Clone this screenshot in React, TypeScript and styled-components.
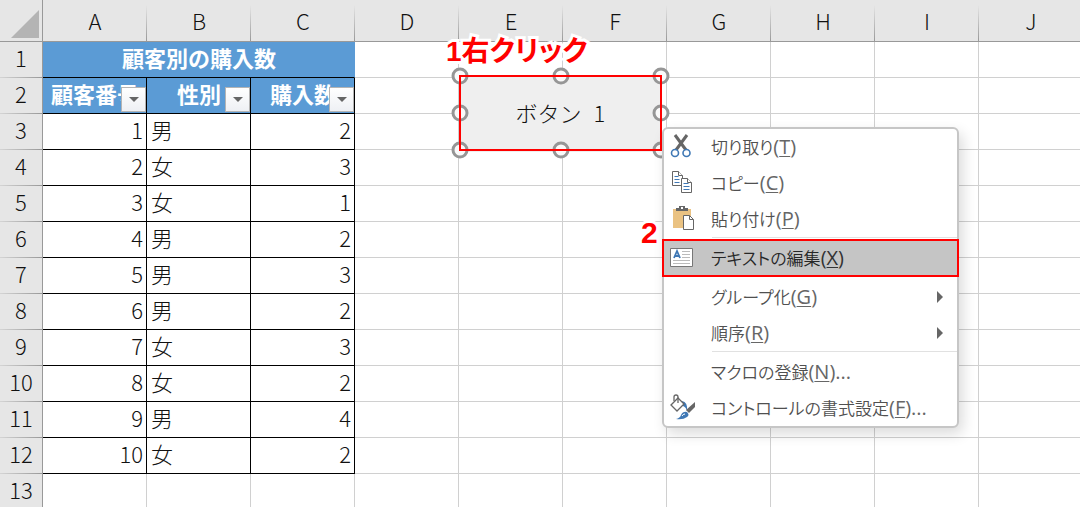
import React from "react";
import styled, { createGlobalStyle, css } from "styled-components";

const GlobalStyle = createGlobalStyle`
  * { box-sizing: border-box; }
  html, body { margin: 0; background: #fff; }
  body { font-family: "Noto Sans CJK JP", sans-serif; }
`;

const Workbook = styled.main`
  position: relative;
  width: 100%;
  height: 100vh;
  overflow: hidden;
  color: #111;
  font-size: 22px;
  font-weight: 300;
`;

const Sheet = styled.table`
  table-layout: fixed;
  width: 1083px;
  border-collapse: separate;
  border-spacing: 0;
`;

const RowHeaderCol = styled.col`
  width: 43px;
`;

const Corner = styled.td`
  height: 42px;
  padding: 0 3px 3px 0;
  background: #e6e6e6;
  border-right: 1px solid #999;
  border-bottom: 1px solid #999;
  vertical-align: bottom;
  text-align: right;
  svg { display: block; margin-left: auto; }
`;

const ColumnHeader = styled.th`
  height: 42px;
  padding: 0 0 1px;
  background: linear-gradient(#e6e6e6, #999) right bottom / 1px 36px no-repeat #e6e6e6;
  border-bottom: 1px solid #999;
  font-weight: 300;
  line-height: 36px;
`;

const RowHeader = styled.th`
  height: 36px;
  padding: 0 0 6px;
  background: linear-gradient(90deg, #d4d4d4, #999) left bottom / 100% 1px no-repeat #e6e6e6;
  border-right: 1px solid #999;
  font-weight: 300;
  line-height: 30px;
`;

type CellKind = "data" | "title" | "heading";

const Cell = styled.td<{ $kind?: CellKind; $align?: "left" | "right" | "center" }>`
  position: relative;
  height: 36px;
  padding: 0 3px 5px 4px;
  border-right: 1px solid #d0d0d0;
  border-bottom: 1px solid #d0d0d0;
  line-height: 30px;
  text-align: ${(p) => p.$align ?? "left"};
  white-space: nowrap;
  ${(p) => p.$kind && css`border-color: #000;`}
  ${(p) => (p.$kind === "title" || p.$kind === "heading") && css`
    background: #5b9bd5;
    color: #fff;
    font-weight: 700;
  `}
  ${(p) => p.$kind === "title" && css`border-right-color: #5b9bd5;`}
`;

const FilterButton = styled.button`
  position: absolute;
  right: 0;
  bottom: 1px;
  display: flex;
  align-items: center;
  justify-content: center;
  width: 25px;
  height: 25px;
  padding: 0;
  border: 1px solid #b4b4b4;
  background: linear-gradient(#fff, #eef0f4);
`;

const FormButton = styled.button`
  position: absolute;
  left: 459px;
  top: 75px;
  display: flex;
  align-items: center;
  justify-content: center;
  gap: 12px;
  width: 203px;
  height: 77px;
  padding: 0 0 4px;
  border: 0;
  background: #efefef;
  color: #111;
  font: inherit;
  svg { position: absolute; left: -10px; top: -10px; }
`;

const Callout = styled.strong<{ $x: number; $y: number; $size: number }>`
  position: absolute;
  left: ${(p) => p.$x}px;
  top: ${(p) => p.$y}px;
  color: #f00;
  font-family: "Liberation Sans", "Noto Sans CJK JP", sans-serif;
  font-size: ${(p) => p.$size}px;
  font-weight: 700;
  line-height: 36px;
  white-space: nowrap;
  font-feature-settings: "palt";
  -webkit-text-stroke: 6px #fff;
  paint-order: stroke fill;
`;

const Menu = styled.div`
  position: absolute;
  left: 662px;
  top: 127px;
  width: 297px;
  border: 2px solid #c6c6c6;
  border-radius: 6px;
  background: #fff;
  box-shadow: 4px 6px 14px rgba(0, 0, 0, 0.14);
`;

const MenuItem = styled.button<{ $active?: boolean }>`
  position: relative;
  display: grid;
  grid-template-columns: 47px 1fr 20px;
  align-items: center;
  width: 100%;
  height: 36px;
  padding: 0;
  border: 0;
  background: none;
  color: #505050;
  font-family: "Noto Sans CJK JP", sans-serif;
  font-size: 17px;
  font-weight: 350;
  font-feature-settings: "palt";
  line-height: 34px;
  text-align: left;
  white-space: nowrap;
  ${(p) => p.$active && css`
    width: calc(100% + 2px);
    margin: 0 -1px;
    padding: 0 1px;
    background: #c5c5c5;
    color: #262626;
    outline: 2px solid #f00;
    outline-offset: -1px;
  `}
`;

const IconSlot = styled.span`
  display: flex;
  padding: 0 0 2px 6px;
`;

const Mnemonic = styled.span<{ $active?: boolean }>`
  color: ${(p) => (p.$active ? "#333" : "#666")};
  font-family: "Open Sans", sans-serif;
  font-size: 20px;
  font-weight: 400;
  u { text-decoration-thickness: 1px; text-underline-offset: 2px; }
`;

const Divider = styled.hr`
  height: 1px;
  margin: 0 0 2px 48px;
  border: 0;
  background: #e1e1e1;
`;

const CutIcon = () => (
  <svg width="26" height="26" viewBox="0 0 26 26" fill="none">
    <path d="M5 2 16 17M17 2 6 17" stroke="#666" strokeWidth="3" />
    <circle cx="5" cy="20" r="3.500" fill="#fff" stroke="#3f78b5" strokeWidth="1.600" />
    <circle cx="16.500" cy="20" r="3.500" fill="#fff" stroke="#3f78b5" strokeWidth="1.600" />
  </svg>
);

const CopyIcon = () => (
  <svg width="26" height="26" viewBox="0 0 26 26" fill="#fff" stroke="#666">
    <path d="M2.500 2.500h6l4 4v10h-10z" />
    <path d="M8.500 2.500v4h4" />
    <path d="M4.500 7.500h4M4.500 10.500h5M4.500 13.500h5" stroke="#3f78b5" />
    <path d="M11.500 9.500h6l4 4v10h-10z" />
    <path d="M17.500 9.500v4h4" />
    <path d="M13.500 14.500h5M13.500 17.500h6M13.500 20.500h6" stroke="#3f78b5" />
  </svg>
);

const PasteIcon = () => (
  <svg width="26" height="26" viewBox="0 0 26 26" fill="none">
    <path d="M3 4h18v19H3z" fill="#eac282" />
    <path d="M6 6V3h3V1h6v2h3v3z" fill="#666" />
    <path d="M11 2h2v2h-2z" fill="#fff" />
    <path d="M13.500 10.500h6l4 4v10h-10z" fill="#fff" stroke="#666" />
    <path d="M19.500 10.500v4h4" stroke="#666" />
  </svg>
);

const TextIcon = () => (
  <svg width="26" height="26" viewBox="0 0 26 26" fill="none">
    <path d="M.5 4.500h22v18H.5z" fill="#fff" stroke="#777" />
    <path d="m4 14 3-7 3 7M5 12h4" stroke="#3f78b5" strokeWidth="1.800" />
    <path d="M12 7.500h8M12 10.500h8M12 13.500h8M3 16.500h17M3 19.500h17" stroke="#bbb" />
  </svg>
);

const FormatIcon = () => (
  <svg width="26" height="28" viewBox="0 0 26 28" fill="none">
    <path d="M12 8q6 1 5 10-1-4-4-5z" fill="#3f78b5" />
    <path d="m1 12 7-7 6 6-7 7z" fill="#fff" stroke="#666" strokeWidth="1.300" />
    <path d="M4 8V4q0-2 2-2t2 2v6" stroke="#666" strokeWidth="1.300" />
    <path d="M25 9v5l-6 6-3-3z" fill="#666" />
    <path d="M6 26q4-1 5-4 2-4 6-3 3 3 0 5-4 3-11 2z" fill="#3f78b5" />
    <path d="M12 23q1-2 3-2" stroke="#fff" />
  </svg>
);

const Arrow = () => (
  <svg width="7" height="12" viewBox="0 0 7 12">
    <path d="M0 0l6 6-6 6z" fill="#666" />
  </svg>
);

const HANDLES = [
  [11, 11], [112, 11], [212, 11],
  [11, 48], [212, 48],
  [11, 85], [112, 85], [212, 85],
];

const SelectionFrame = () => (
  <svg width="224" height="98" viewBox="0 0 224 98" fill="none">
    {HANDLES.map(([x, y]) => (
      <circle key={`${x}-${y}`} cx={x} cy={y} r="7" fill="#fafafa" stroke="#969696" strokeWidth="3" />
    ))}
    <path d="M11 11h201v74H11z" stroke="#f00" strokeWidth="2" />
  </svg>
);

const COLUMNS = ["A", "B", "C", "D", "E", "F", "G", "H", "I", "J"];
const HEADINGS = ["顧客番号", "性別", "購入数"];
const RECORDS: [number, string, number][] = [
  [1, "男", 2], [2, "女", 3], [3, "女", 1], [4, "男", 2], [5, "男", 3],
  [6, "男", 2], [7, "女", 3], [8, "女", 2], [9, "男", 4], [10, "女", 2],
];

const EmptyCells = ({ count }: { count: number }) => (
  <>{Array.from({ length: count }, (_, i) => <Cell key={i} />)}</>
);

type Entry = { label: string; letter: string; more?: string; icon?: React.ReactNode; submenu?: boolean; active?: boolean };

const MENU: Entry[][] = [
  [
    { label: "切り取り", letter: "T", icon: <CutIcon /> },
    { label: "コピー", letter: "C", icon: <CopyIcon /> },
    { label: "貼り付け", letter: "P", icon: <PasteIcon /> },
  ],
  [{ label: "テキストの編集", letter: "X", icon: <TextIcon />, active: true }],
  [
    { label: "グループ化", letter: "G", submenu: true },
    { label: "順序", letter: "R", submenu: true },
  ],
  [
    { label: "マクロの登録", letter: "N", more: "..." },
    { label: "コントロールの書式設定", letter: "F", more: "...", icon: <FormatIcon /> },
  ],
];

export default function App() {
  return (
    <Workbook>
      <GlobalStyle />
      <Sheet>
        <colgroup>
          <RowHeaderCol />
          {COLUMNS.map((c) => <col key={c} />)}
        </colgroup>
        <thead>
          <tr>
            <Corner>
              <svg width="28" height="28" viewBox="0 0 28 28"><path d="M28 0v28H0z" fill="#b4b4b4" /></svg>
            </Corner>
            {COLUMNS.map((c) => <ColumnHeader key={c} scope="col">{c}</ColumnHeader>)}
          </tr>
        </thead>
        <tbody>
          <tr>
            <RowHeader scope="row">1</RowHeader>
            <Cell colSpan={3} $kind="title" $align="center">顧客別の購入数</Cell>
            <EmptyCells count={7} />
          </tr>
          <tr>
            <RowHeader scope="row">2</RowHeader>
            {HEADINGS.map((h) => (
              <Cell key={h} $kind="heading" $align="center">
                {h}
                <FilterButton aria-label={h}>
                  <svg width="10" height="5" viewBox="0 0 10 5"><path d="M0 0h10L5 5z" fill="#666" /></svg>
                </FilterButton>
              </Cell>
            ))}
            <EmptyCells count={7} />
          </tr>
          {RECORDS.map(([id, sex, count]) => (
            <tr key={id}>
              <RowHeader scope="row">{id + 2}</RowHeader>
              <Cell $kind="data" $align="right">{id}</Cell>
              <Cell $kind="data">{sex}</Cell>
              <Cell $kind="data" $align="right">{count}</Cell>
              <EmptyCells count={7} />
            </tr>
          ))}
          <tr>
            <RowHeader scope="row">13</RowHeader>
            <EmptyCells count={10} />
          </tr>
        </tbody>
      </Sheet>
      <FormButton>
        <span>ボタン</span>
        <span>1</span>
        <SelectionFrame />
      </FormButton>
      <Callout $x={446} $y={34} $size={28}>1右クリック</Callout>
      <Callout $x={641} $y={215} $size={30}>2</Callout>
      <Menu role="menu">
        {MENU.map((group, i) => (
          <React.Fragment key={i}>
            {i > 0 && <Divider />}
            {group.map((item) => (
              <MenuItem key={item.letter} role="menuitem" $active={item.active}>
                <IconSlot>{item.icon}</IconSlot>
                <span>
                  {item.label}
                  <Mnemonic $active={item.active}>(<u>{item.letter}</u>){item.more}</Mnemonic>
                </span>
                {item.submenu && <Arrow />}
              </MenuItem>
            ))}
          </React.Fragment>
        ))}
      </Menu>
    </Workbook>
  );
}
